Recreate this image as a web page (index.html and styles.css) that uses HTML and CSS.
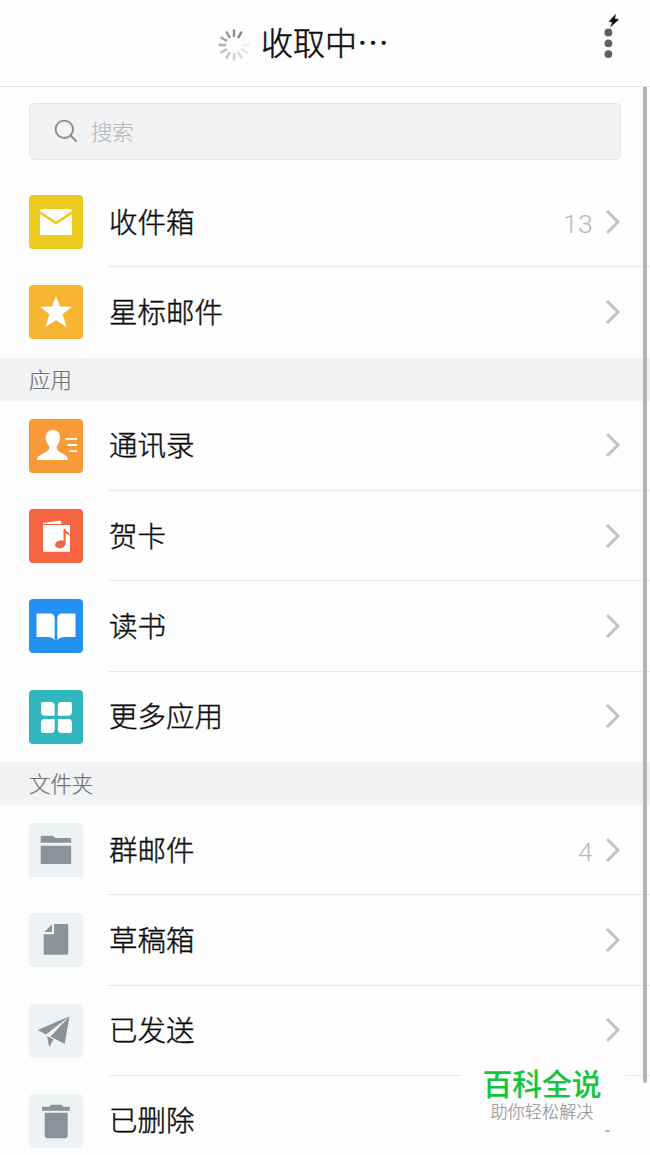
FILE: index.html
```html
<!DOCTYPE html>
<html lang="zh-CN">
<head>
<meta charset="utf-8">
<title>收取中</title>
<link rel="stylesheet" href="styles.css">
</head>
<body>
<svg class="defs" aria-hidden="true">
  <symbol id="chev" viewBox="0 0 16 26"><path d="M2 2 13 13 2 24" fill="none" stroke="#c3c3c5" stroke-width="3"/></symbol>
</svg>
<div class="screen">
  <header class="header">
    <svg class="spinner" viewBox="-16 -16 32 32" stroke-width="2.5" stroke-linecap="round">
      <path d="M0-9V-14.5" stroke="#8e8e8e"/>
      <path d="M0-9V-14.5" stroke="#858585" transform="rotate(30)"/>
      <path d="M0-9V-14.5" stroke="#f8f8f8" transform="rotate(60)"/>
      <path d="M0-9V-14.5" stroke="#eeeeee" transform="rotate(90)"/>
      <path d="M0-9V-14.5" stroke="#e2e2e2" transform="rotate(120)"/>
      <path d="M0-9V-14.5" stroke="#dadada" transform="rotate(150)"/>
      <path d="M0-9V-14.5" stroke="#d2d2d2" transform="rotate(180)"/>
      <path d="M0-9V-14.5" stroke="#c8c8c8" transform="rotate(210)"/>
      <path d="M0-9V-14.5" stroke="#bcbcbc" transform="rotate(240)"/>
      <path d="M0-9V-14.5" stroke="#b0b0b0" transform="rotate(270)"/>
      <path d="M0-9V-14.5" stroke="#a5a5a5" transform="rotate(300)"/>
      <path d="M0-9V-14.5" stroke="#999999" transform="rotate(330)"/>
    </svg>
    <h1 class="title">收取中⋯</h1>
    <svg class="more" viewBox="0 0 20 46"><g fill="#606062"><circle cx="8.4" cy="19.5" r="3.9"/><circle cx="8.4" cy="30.3" r="3.9"/><circle cx="8.4" cy="41.1" r="3.9"/></g><path d="M15.5 1.5 9 8.500 12.500 9.200 10.500 13.700 18.700 6.600 14.700 5.800Z" fill="#111" stroke="#111" stroke-width=".5"/></svg>
  </header>

  <div class="search">
    <svg class="lens" viewBox="0 0 24 24" fill="none" stroke="#88898c" stroke-width="1.8"><circle cx="10.3" cy="10.3" r="8.7"/><path d="M16.5 16.5 22.5 22.5"/></svg>
    <span>搜索</span>
  </div>

  <ul class="list">
    <li class="row">
      <svg class="icon yellow" viewBox="0 0 54 54"><path d="M13 14H41Q43 14 43 16L27 26.5 11 16Q11 14 13 14ZM11 19 27 29.8 43 19V40H11Z" fill="#fff"/></svg>
      <div class="body"><span class="label">收件箱</span><span class="count">13</span><svg class="chev"><use href="#chev"/></svg></div>
    </li>
    <li class="row">
      <svg class="icon amber" viewBox="0 0 54 54"><path d="M27 11 31 21.6 43 21.8 33.6 29.2 37.6 42 27 35 16.4 42 20.4 29.2 11 21.8 23 21.6Z" fill="#fff"/></svg>
      <div class="body"><span class="label">星标邮件</span><svg class="chev"><use href="#chev"/></svg></div>
    </li>
  </ul>

  <h2 class="section">应用</h2>
  <ul class="list">
    <li class="row">
      <svg class="icon orange" viewBox="0 0 54 54"><path d="M24 11C28.500 11 31.100 14 31.100 18.500C31.100 22.500 29 25 27.700 27.400C27.500 31.500 30 32.500 33 34.200C37 36.500 39 37.500 39 41H8C8 37.500 10.500 36.300 14.500 34.200C18 32.300 20.500 31.200 20.300 27.400C18.500 25 16.700 22.500 16.700 18.500C16.700 14 19.500 11 24 11Z" fill="#fff"/><path d="M36.500 19.800H48M38.500 26H48M40.300 32.200H48" stroke="#fff" stroke-width="1.8"/></svg>
      <div class="body"><span class="label">通讯录</span><svg class="chev"><use href="#chev"/></svg></div>
    </li>
    <li class="row">
      <svg class="icon red" viewBox="0 0 54 54"><path d="M14 14 31 11.500 32.300 12.500V15H14ZM14 16H41V42.700H14Z" fill="#fff"/><g fill="#f56443"><ellipse cx="31.300" cy="35.300" rx="5.300" ry="3.900" transform="rotate(-12 31.300 35.300)"/><path d="M34.500 20H36.400C36.900 23 40 22.500 41 27L39.500 26C38.500 25 37.500 24.800 36.600 24.800V35.500H34.500Z"/></g></svg>
      <div class="body"><span class="label">贺卡</span><svg class="chev"><use href="#chev"/></svg></div>
    </li>
    <li class="row">
      <svg class="icon blue" viewBox="0 0 54 54"><path d="M7.500 14.500H21Q25.700 14.500 25.700 19.500V41.200Q23.500 38 18.500 38H7.500ZM46.500 14.500H33Q28.300 14.500 28.300 19.500V41.200Q30.500 38 35.500 38H46.500Z" fill="#fff"/></svg>
      <div class="body"><span class="label">读书</span><svg class="chev"><use href="#chev"/></svg></div>
    </li>
    <li class="row">
      <svg class="icon teal" viewBox="0 0 54 54" fill="#fff"><path d="M14 12H22Q25.700 12 25.700 16V25.700H16Q12 25.700 12 22V14Q12 12 14 12ZM32.500 12H41Q43 12 43 14V22Q43 25.700 39 25.700H28.800V16Q28.800 12 32.500 12ZM16 29H25.700V39Q25.700 43 22 43H14Q12 43 12 41V33Q12 29 16 29ZM28.800 29H39Q43 29 43 33V41Q43 43 41 43H32.500Q28.800 43 28.800 39Z"/></svg>
      <div class="body"><span class="label">更多应用</span><svg class="chev"><use href="#chev"/></svg></div>
    </li>
  </ul>

  <h2 class="section">文件夹</h2>
  <ul class="list">
    <li class="row">
      <svg class="icon pale" viewBox="0 0 54 54"><path d="M12.700 12.700H23.500L26.500 15H41Q42.200 15 42.200 16V19.700H11.700V13.700Q11.700 12.700 12.700 12.700ZM11.700 22.700H42.200V40Q42.200 41 41.200 41H12.700Q11.700 41 11.700 40Z"/></svg>
      <div class="body"><span class="label">群邮件</span><span class="count">4</span><svg class="chev"><use href="#chev"/></svg></div>
    </li>
    <li class="row">
      <svg class="icon pale" viewBox="0 0 54 54"><path d="M25 11H38Q39.200 11 39.200 12.200V40.500Q39.200 41.700 38 41.700H16Q14.700 41.700 14.700 40.500V21.300H25ZM23 11.500V19H15.300Z"/></svg>
      <div class="body"><span class="label">草稿箱</span><svg class="chev"><use href="#chev"/></svg></div>
    </li>
    <li class="row">
      <svg class="icon pale" viewBox="0 0 54 54"><path d="M40.500 12.300 8.700 26 17 30.500ZM40.500 12.300 35.700 40 21.500 32.500ZM18 32 24.500 35.300 20.300 43.300Z"/></svg>
      <div class="body"><span class="label">已发送</span><svg class="chev"><use href="#chev"/></svg></div>
    </li>
    <li class="row">
      <svg class="icon pale" viewBox="0 0 54 54"><path d="M13 12.700H20.500L22 10.700H32.700L34.200 12.700H40.800V16.700H13ZM15.700 18.700H38.700V41.300Q38.700 44.200 35.700 44.200H18.700Q15.700 44.200 15.700 41.300Z"/></svg>
      <div class="body"><span class="label">已删除</span></div>
    </li>
  </ul>

  <div class="scrollbar"></div>
  <div class="badge"><strong>百科全说</strong><span>助你轻松解决</span></div>
  <i class="speck"></i>
</div>
</body>
</html>
```
FILE: styles.css
```css
* { box-sizing: border-box; margin: 0; padding: 0; }
body { background: #fefefe; font-family: "Noto Sans CJK SC", sans-serif; font-weight: 300; color: #0c0c0c; }
.defs { position: absolute; width: 0; height: 0; }
.screen { position: relative; width: 650px; height: 1155px; overflow: hidden; }
.header { position: relative; display: flex; align-items: center; height: 87px; padding-left: 218px; gap: 11px; border-bottom: 1px solid #e6e6e7; }
.spinner { width: 32px; height: 32px; margin-top: 3px; }
.title { font-size: 32px; font-weight: 300; line-height: 46px; padding-bottom: 4px; -webkit-text-stroke: .5px; }
.more { position: absolute; left: 600px; top: 13px; width: 20px; height: 46px; }
.search { display: flex; align-items: center; gap: 13px; height: 57px; margin: 16px 29px 17px; padding: 0 0 1px 24px; border: 1px solid #e6e7e9; border-radius: 5px; background: #f2f3f5; color: #b8b9bc; font-size: 21.300px; -webkit-text-stroke: .2px; }
.lens { width: 24px; height: 24px; }
.search span { padding-bottom: 1px; }
.list { list-style: none; }
.row { display: flex; align-items: center; height: 90.250px; padding-left: 29px; }
.icon { flex: none; width: 54px; height: 54px; margin-right: 25px; border-radius: 4px; }
.body { display: flex; align-items: center; flex: 1; height: 100%; padding: 0 29px 0 1px; border-bottom: 1px solid #e8e8e9; }
.row:last-child .body { border-bottom-color: transparent; }
.label { flex: 1; font-size: 28.500px; line-height: 42px; padding-bottom: 2px; -webkit-text-stroke: .4px; }
.count { font-family: Roboto, sans-serif; font-weight: 300; font-size: 26.500px; letter-spacing: .3px; color: #b8b8ba; margin-right: 12px; padding-top: 4px; }
.chev { width: 16px; height: 26px; }
.section { height: 43.300px; padding-left: 29px; background: #f2f3f5; color: #707174; font-size: 21.400px; font-weight: 300; line-height: 41px; -webkit-text-stroke: .2px; }
.yellow { background: #eecb20; }
.amber { background: #f8b533; }
.orange { background: #f99a38; }
.red { background: #f56443; }
.blue { background: #2390f2; }
.teal { background: #32b6bd; }
.pale { background: #edf2f5; fill: #8b9398; }
.scrollbar { position: absolute; left: 643px; top: 87px; width: 4px; height: 996px; border-radius: 0 0 2px 2px; background: #b4b4b4; }
.badge { position: absolute; left: 462px; top: 1064px; width: 163px; height: 66px; background: #fefefe; display: flex; flex-direction: column; align-items: center; padding-right: 3px; }
.badge strong { color: #12c53c; font-size: 29.800px; font-weight: 500; line-height: 37px; }
.badge span { color: #929292; font-size: 17.200px; line-height: 20px; -webkit-text-stroke: .15px; }
.speck { position: absolute; left: 605px; top: 1130px; width: 5px; height: 2px; border-radius: 1px; background: #b5b5b5; }
```
